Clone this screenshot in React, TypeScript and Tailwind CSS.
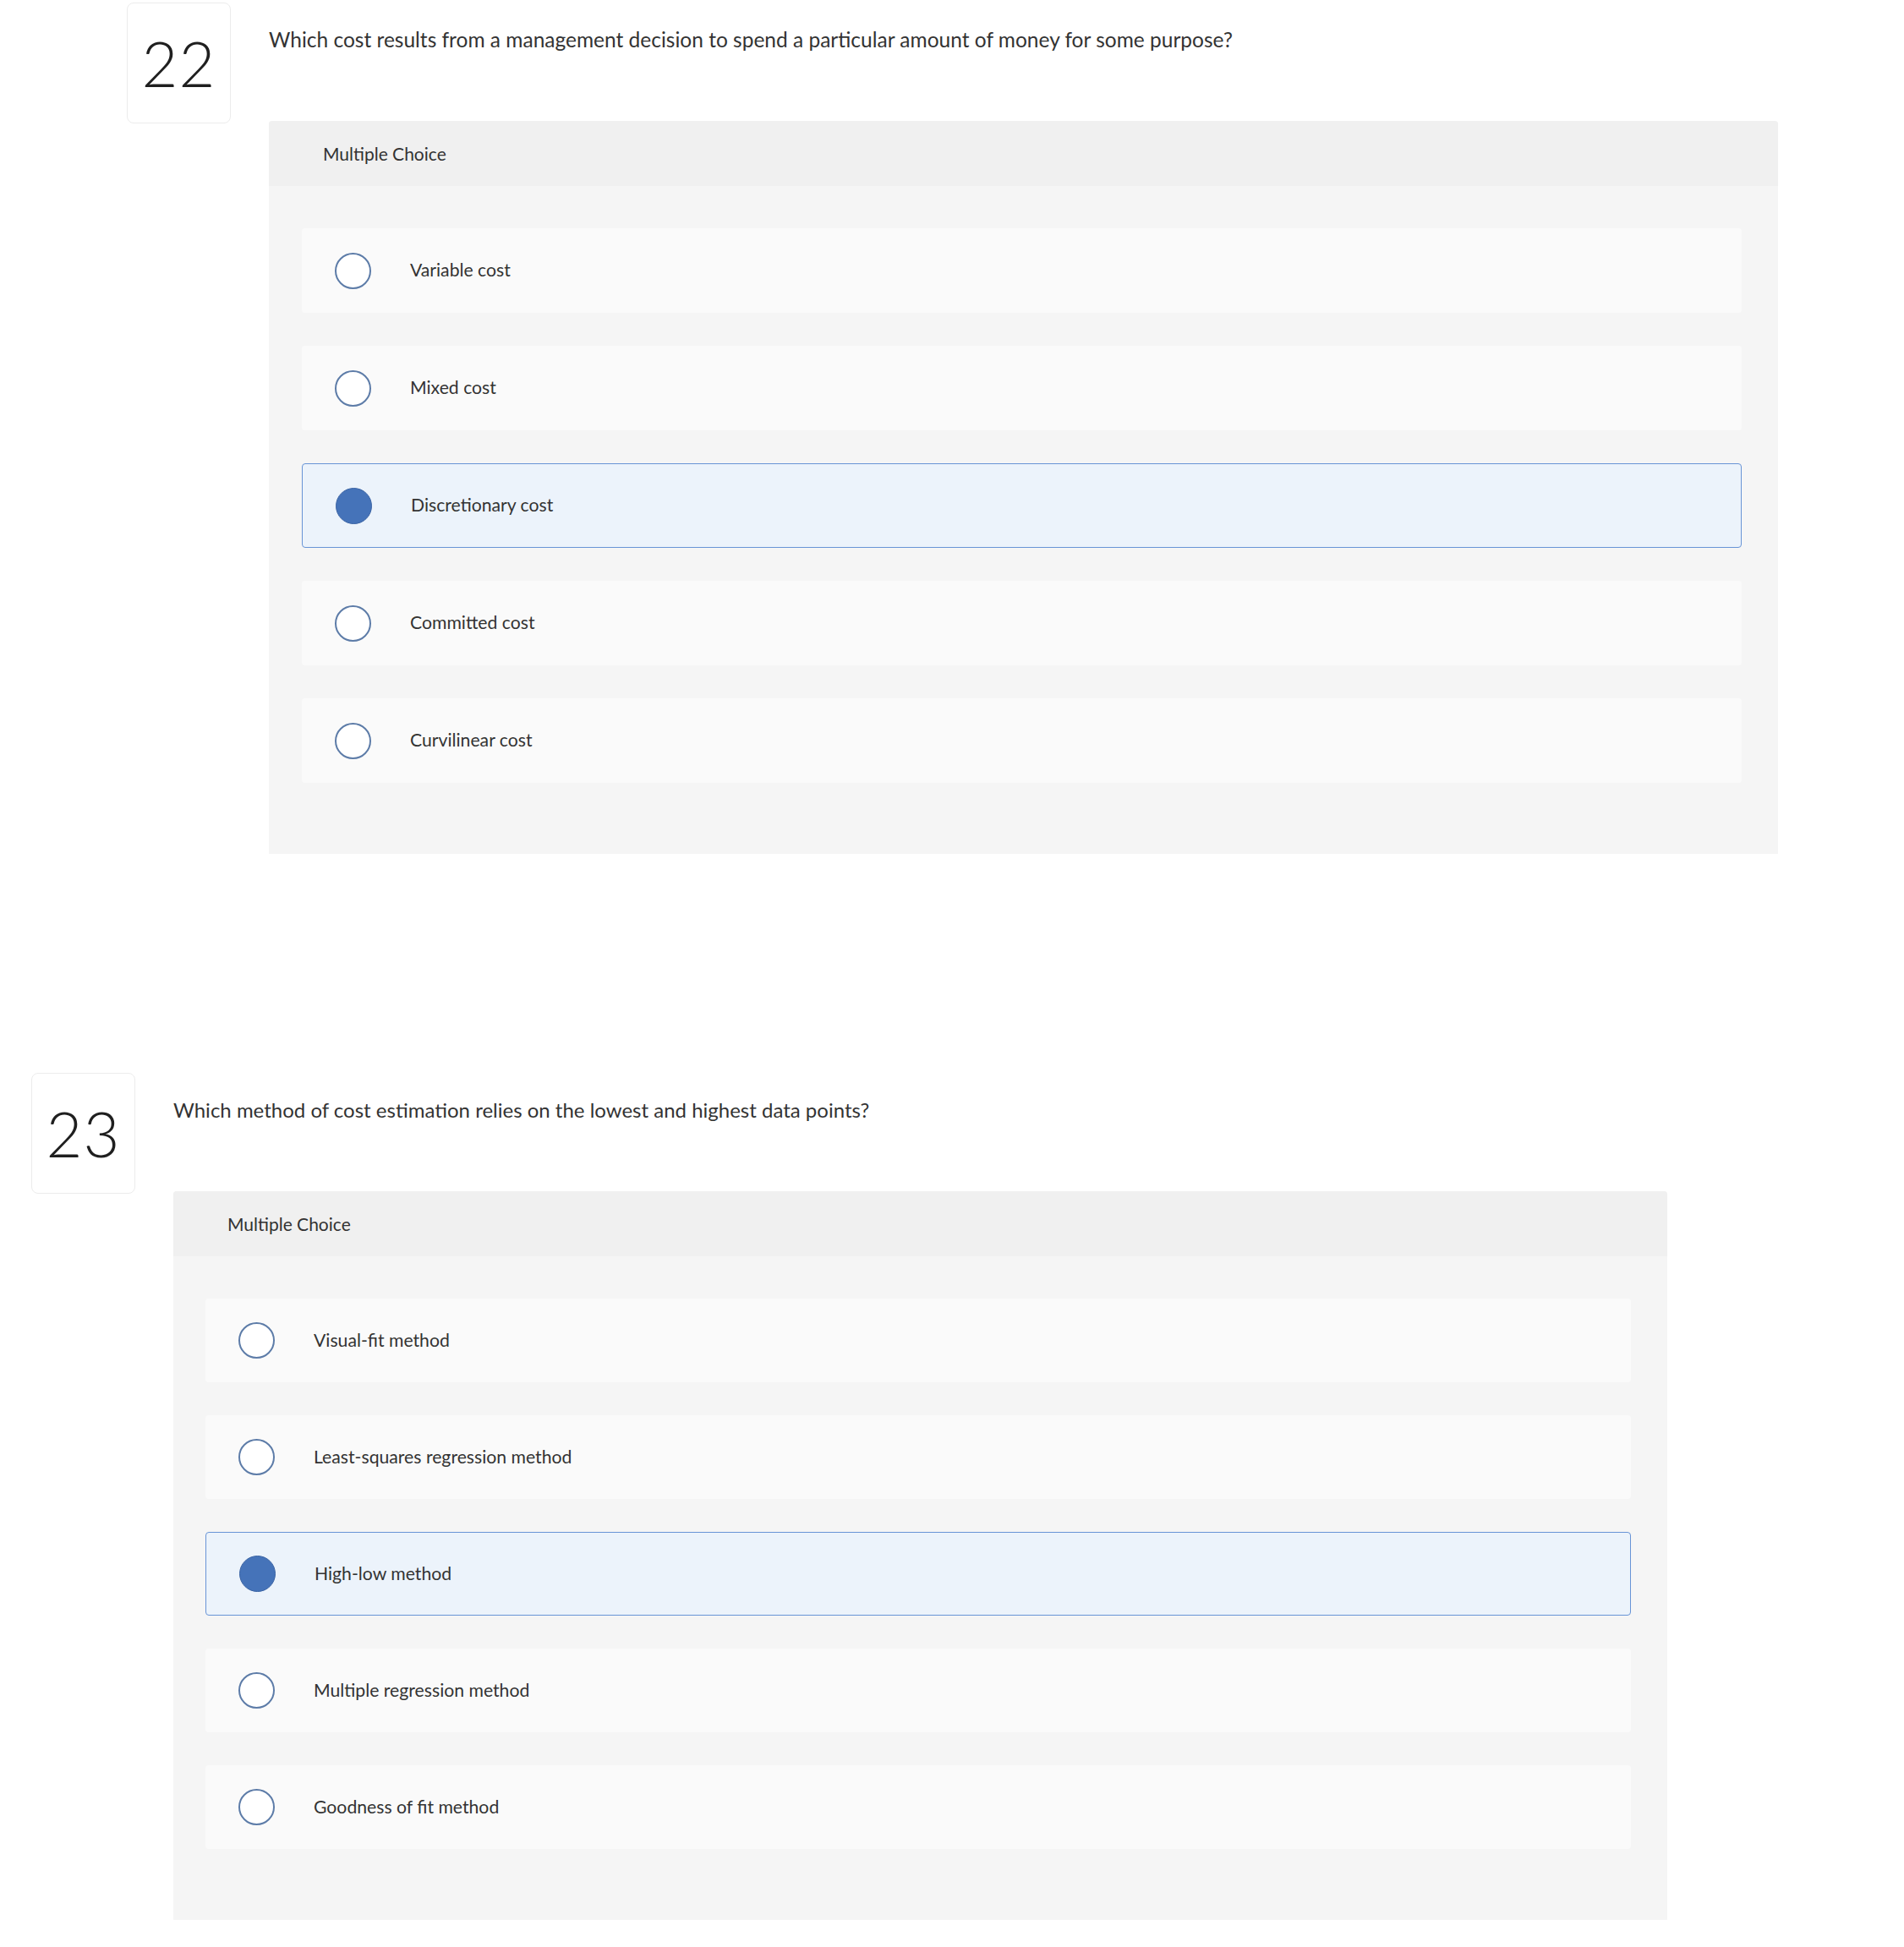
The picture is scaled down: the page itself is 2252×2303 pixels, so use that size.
import React from 'react';

type Choice = { label: string; selected?: boolean };

type Question = {
  number: number;
  text: string;
  choices: Choice[];
  left: string;
  textSize: string;
  panelWidth: string;
  optionHeight: string;
  padLeft: string;
};

const questions: Question[] = [
  {
    number: 22,
    text: 'Which cost results from a management decision to spend a particular amount of money for some purpose?',
    choices: [
      { label: 'Variable cost' },
      { label: 'Mixed cost' },
      { label: 'Discretionary cost', selected: true },
      { label: 'Committed cost' },
      { label: 'Curvilinear cost' },
    ],
    left: 'pl-[150px]',
    textSize: 'text-[24.5px]',
    panelWidth: 'w-[1785px]',
    optionHeight: 'h-[100px]',
    padLeft: 'pl-[39px]',
  },
  {
    number: 23,
    text: 'Which method of cost estimation relies on the lowest and highest data points?',
    choices: [
      { label: 'Visual-fit method' },
      { label: 'Least-squares regression method' },
      { label: 'High-low method', selected: true },
      { label: 'Multiple regression method' },
      { label: 'Goodness of fit method' },
    ],
    left: 'pl-[37px]',
    textSize: 'text-[24px]',
    panelWidth: 'w-[1767px]',
    optionHeight: 'h-[99px]',
    padLeft: 'pl-[38px]',
  },
];

const Radio: React.FC<{ checked?: boolean }> = ({ checked }) => (
  <span
    className={`block w-[43px] h-[43px] rounded-full shrink-0 ${
      checked ? 'bg-[#4573b9] border-[1.5px] border-[#3a63a4]' : 'bg-white border-2 border-[#5d7ca8]'
    }`}
  />
);

const QuestionBlock: React.FC<{ q: Question }> = ({ q }) => (
  <div className={`flex ${q.left}`}>
    <div className="w-[123px] h-[143px] shrink-0 rounded-[8px] border border-[#ececec] bg-white flex items-center justify-center">
      <span className="text-[74px] font-light leading-none text-[#1f1f1f] tracking-[1px]">{q.number}</span>
    </div>
    <div className="ml-[45px] flex flex-col">
      <p className={`mt-[30px] ${q.textSize} leading-[28px] text-[#333]`}>{q.text}</p>
      <div className={`mt-[82px] ${q.panelWidth} rounded-t-[4px] bg-[#f5f5f5]`}>
        <div className="h-[77px] flex items-center pl-[64px] bg-[#f0f0f0] rounded-t-[4px]">
          <span className="text-[21px] text-[#333]">Multiple Choice</span>
        </div>
        <div className={`flex flex-col gap-[39px] pt-[50px] pb-[84px] ${q.padLeft} pr-[43px]`}>
          {q.choices.map((c) => (
            <div
              key={c.label}
              className={`${q.optionHeight} flex items-center rounded-[4px] pl-[39px] ${
                c.selected ? 'bg-[#ecf3fb] border-[1.5px] border-[#6894d6] pl-[37.5px]' : 'bg-[#fafafa]'
              }`}
            >
              <Radio checked={c.selected} />
              <span className="ml-[46px] text-[21.2px] text-[#333]">{c.label}</span>
            </div>
          ))}
        </div>
      </div>
    </div>
  </div>
);

const App: React.FC = () => {
  return (
    <div className="min-h-[2303px] w-[2252px] bg-white pt-[3px] font-['Lato','Open_Sans',sans-serif]">
      <QuestionBlock q={questions[0]} />
      <div className="h-[259px]" />
      <QuestionBlock q={questions[1]} />
    </div>
  );
};

export default App;
